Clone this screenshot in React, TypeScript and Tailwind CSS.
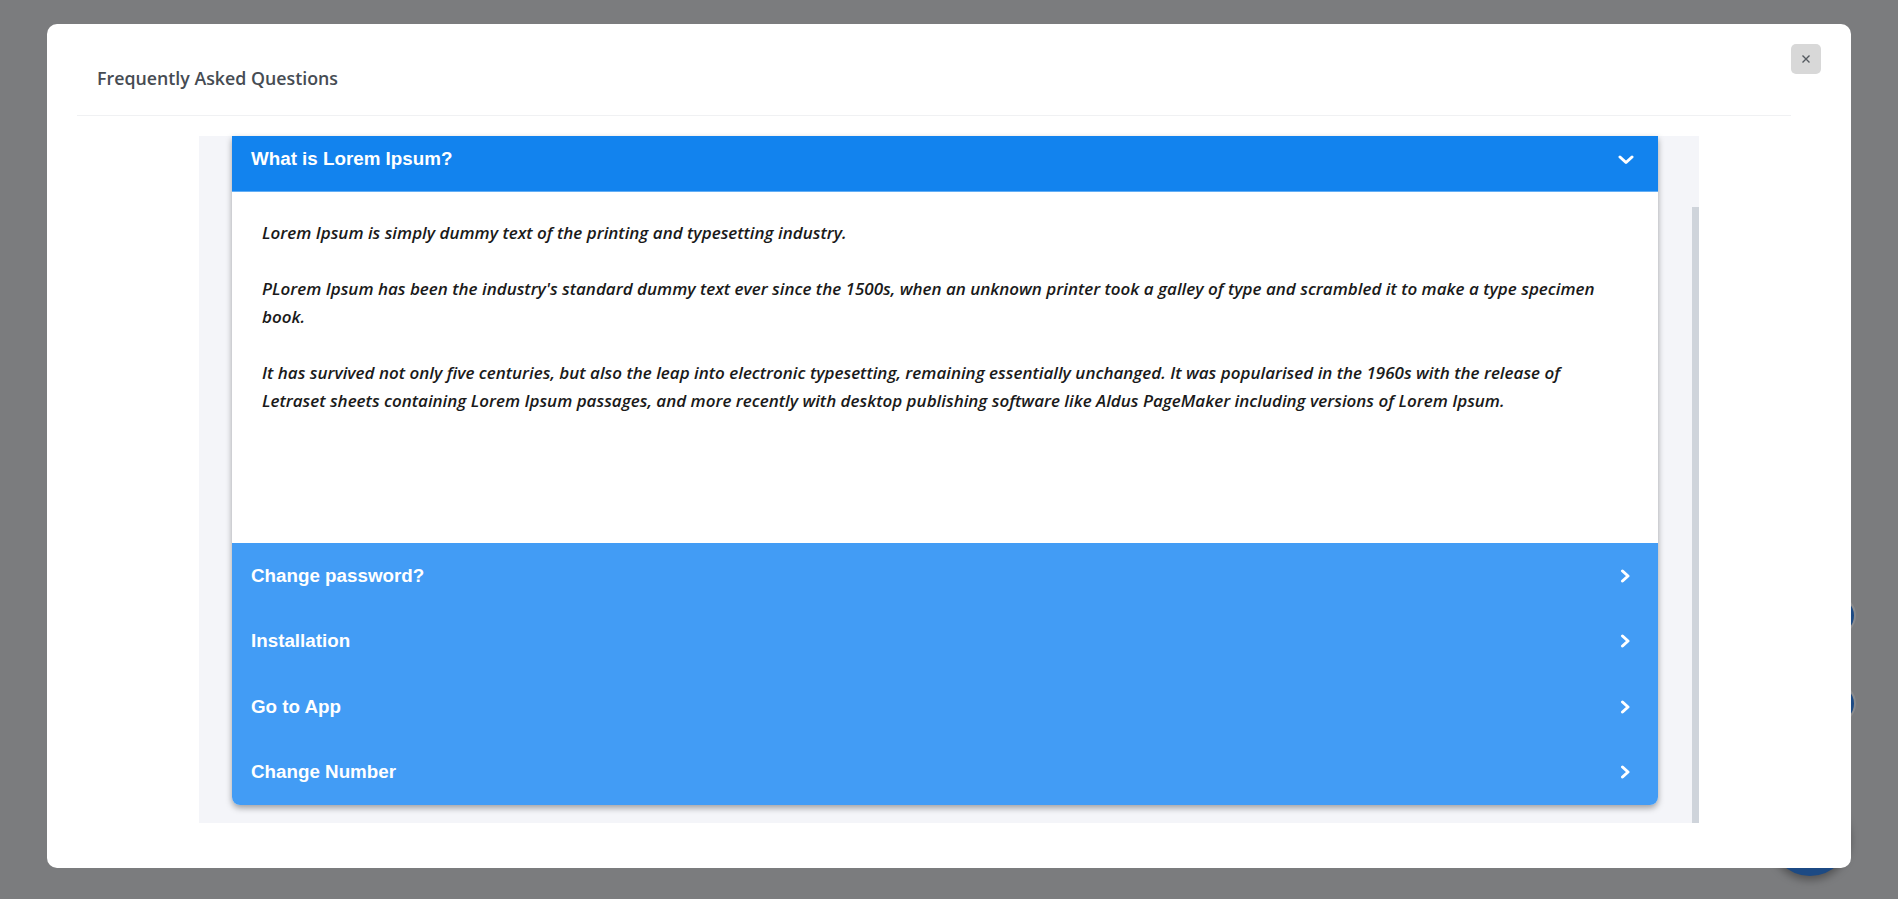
import React from "react";

const items = ["Change password?", "Installation", "Go to App", "Change Number"];

function ChevronRight() {
  return (
    <svg width="11" height="14" viewBox="0 0 11 14" fill="none">
      <path d="M2.5 2 L8 7 L2.5 12" stroke="white" strokeWidth="3" strokeLinecap="round" strokeLinejoin="round" />
    </svg>
  );
}

function ChevronDown() {
  return (
    <svg width="16" height="10" viewBox="0 0 16 10" fill="none">
      <path d="M2 2 L8 7.5 L14 2" stroke="white" strokeWidth="3" strokeLinecap="round" strokeLinejoin="round" />
    </svg>
  );
}

export default function App() {
  return (
    <div className="relative h-[899px] w-[1898px] overflow-hidden bg-[#7b7c7e] pl-[47px] pt-[24px]">
      {/* page elements behind the backdrop */}
      <div className="absolute left-[1815px] top-[595px] h-[41px] w-[41px] rounded-full border-2 border-[#8a8b8d] bg-[#1c4a84]" />
      <div className="absolute left-[1815px] top-[683px] h-[41px] w-[41px] rounded-full border-2 border-[#8a8b8d] bg-[#1c4a84]" />
      <div className="absolute left-[1770px] top-[796px] h-[80px] w-[80px] rounded-full bg-[#1c4a84] shadow-[0_4px_8px_rgba(0,0,0,0.35)]" />

      {/* modal */}
      <div className="relative flex h-[844px] w-[1804px] flex-col rounded-[10px] bg-white">
        <button className="absolute right-[30px] top-[20px] flex h-[30px] w-[30px] items-center justify-center rounded-[5px] bg-[#d8d8d8]">
          <svg width="10" height="10" viewBox="0 0 10 10">
            <path d="M1.5 1.5 L8.5 8.5 M8.5 1.5 L1.5 8.5" stroke="#555a60" strokeWidth="1.4" />
          </svg>
        </button>

        <div className="ml-[30px] mr-[60px] flex h-[92px] items-center border-b border-[#f0f1f3] pl-[20px] pt-[18px]">
          <h2 className="text-[17.8px] text-[#464c53]" style={{ fontFamily: "'Open Sans', sans-serif", fontWeight: 600 }}>
            Frequently Asked Questions
          </h2>
        </div>

        <div className="mx-[152px] mt-[20px] flex h-[687px] bg-[#f4f5f9]">
          <div className="ml-[33px] mr-[34px] flex-1 pb-[18px]">
            <div className="overflow-hidden rounded-b-[8px] shadow-[0_3px_6px_rgba(0,0,0,0.35)]">
              <div className="flex h-[56px] items-center justify-between border-b border-[#63aef5] bg-[#1283ee] pl-[19px] pr-[24px]">
                <span className="pb-[8px] text-[18.8px] font-bold text-white" style={{ fontFamily: "'Liberation Sans', Arial, sans-serif" }}>
                  What is Lorem Ipsum?
                </span>
                <span className="pb-[8px]"><ChevronDown /></span>
              </div>
              <div
                className="h-[351px] bg-white px-[30px] pt-[27px] text-[17px] italic leading-[28px] text-[#1a1a1a]"
                style={{ fontFamily: "'Open Sans', sans-serif", fontWeight: 600 }}
              >
                <p>Lorem Ipsum is simply dummy text of the printing and typesetting industry.</p>
                <p className="mt-[28px]">
                  PLorem Ipsum has been the industry's standard dummy text ever since the 1500s, when an unknown printer took a galley of type and scrambled it to make a type specimen book.
                </p>
                <p className="mt-[28px]">
                  It has survived not only five centuries, but also the leap into electronic typesetting, remaining essentially unchanged. It was popularised in the 1960s with the release of
                  <br />
                  Letraset sheets containing Lorem Ipsum passages, and more recently with desktop publishing software like Aldus PageMaker including versions of Lorem Ipsum.
                </p>
              </div>
              <div className="bg-[#429cf5]">
                {items.map((t) => (
                  <div key={t} className="flex h-[65.5px] items-center justify-between pl-[19px] pr-[27px]">
                    <span className="text-[18.8px] font-bold text-white" style={{ fontFamily: "'Liberation Sans', Arial, sans-serif" }}>
                      {t}
                    </span>
                    <ChevronRight />
                  </div>
                ))}
              </div>
            </div>
          </div>
          <div className="mt-[71px] w-[7px] bg-[#cfd4db]" />
        </div>
      </div>
    </div>
  );
}
